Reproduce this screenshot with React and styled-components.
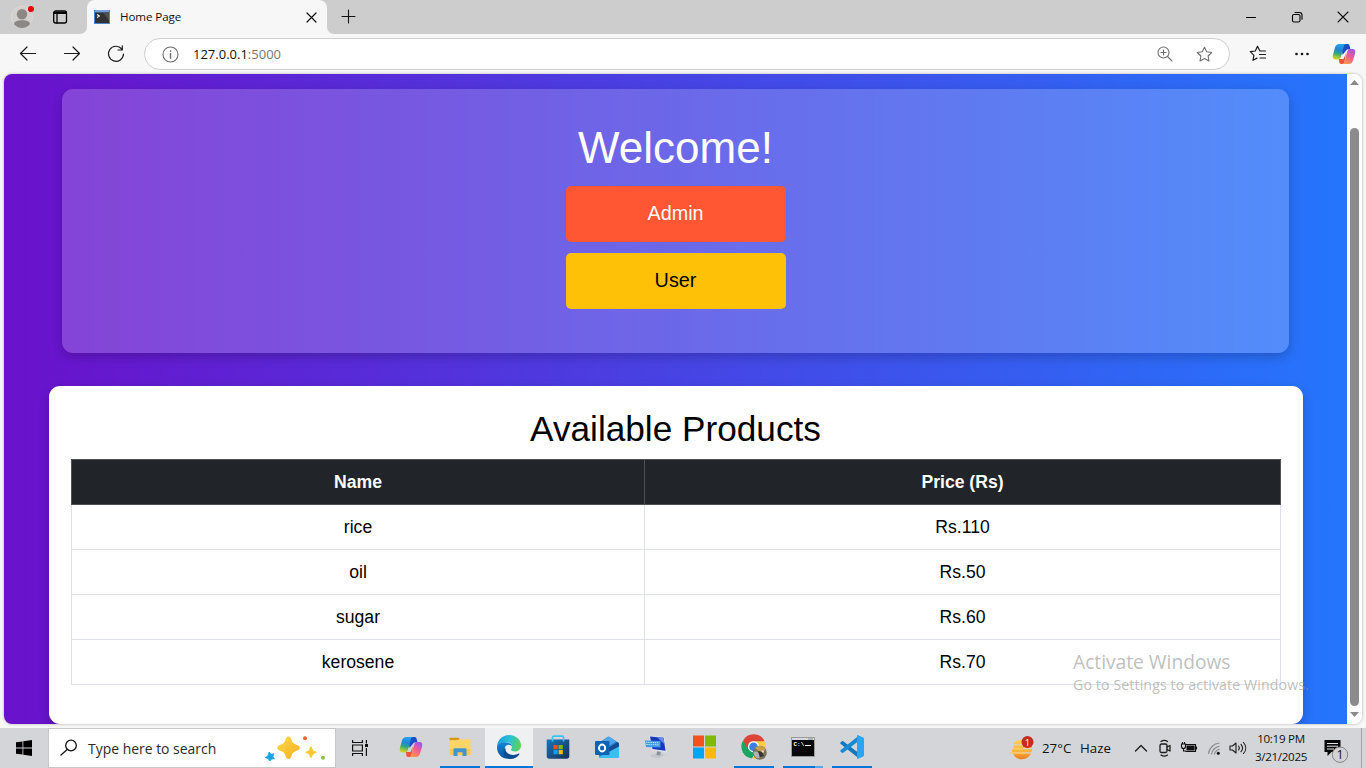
import React from "react";
import styled, { createGlobalStyle, css } from "styled-components";

const GlobalStyle = createGlobalStyle`
  *, *::before, *::after { box-sizing: border-box; }
  body { margin: 0; overflow: hidden; background: #f7f7f7; }
  svg { display: block; flex: none; }
`;

const uiFont = `"Open Sans", "Noto Sans", sans-serif`;

const Screen = styled.div`
  position: relative;
  width: 1366px;
  height: 768px;
  display: flex;
  flex-direction: column;
  background: #f7f7f7;
  font-family: ${uiFont};
  color: #111;
  overflow: hidden;
`;

/* ---------- window title bar ---------- */
const TitleBar = styled.header`
  display: flex;
  height: 34px;
  flex: none;
`;
const TitleLeft = styled.div`
  width: 87px;
  display: flex;
  align-items: center;
  gap: 18px;
  padding-left: 10px;
  background: #cdcdcd;
  border-bottom-right-radius: 7px;
`;
const TabWell = styled.div`
  width: 240px;
  background: #cdcdcd;
`;
const Tab = styled.div`
  height: 34px;
  display: flex;
  align-items: center;
  padding: 0 10px 0 7px;
  background: #f7f7f7;
  border-radius: 8px 8px 0 0;
`;
const TabTitle = styled.span`
  flex: 1;
  margin-left: 10px;
  font-size: 11.6px;
  line-height: 34px;
  letter-spacing: -0.1px;
`;
const TitleRight = styled.div`
  flex: 1;
  display: flex;
  align-items: center;
  padding: 0 17px 1px 14px;
  background: #cdcdcd;
  border-bottom-left-radius: 7px;
`;
const WindowControls = styled.div`
  margin-left: auto;
  display: flex;
  gap: 34px;
`;

/* ---------- toolbar ---------- */
const Toolbar = styled.div`
  height: 40px;
  flex: none;
  display: flex;
  align-items: center;
  padding: 0 10px 0 18px;
`;
const NavButtons = styled.div`
  display: flex;
  gap: 24px;
`;
const AddressBar = styled.div`
  width: 1086px;
  height: 32px;
  margin-left: 18px;
  display: flex;
  align-items: center;
  flex: none;
  padding: 0 16px 0 17px;
  border: 1px solid #cfcfd3;
  border-radius: 16px;
  background: #fff;
`;
const Url = styled.span`
  flex: 1;
  margin-left: 14px;
  font-size: 13px;
  line-height: 30px;
`;
const Port = styled.span`
  color: #767676;
`;
const AddressActions = styled.div`
  display: flex;
  align-items: center;
  gap: 21px;
`;
const ToolActions = styled.div`
  display: flex;
  align-items: center;
  gap: 22px;
  margin-left: 19px;
`;

/* ---------- page ---------- */
const Viewport = styled.div`
  height: 650px;
  flex: none;
  margin: 0 4px;
  display: flex;
  border-radius: 8px;
  overflow: hidden;
  box-shadow: 0 0 3px rgba(0, 0, 0, 0.3);
`;
const Page = styled.main`
  width: 1343px;
  display: flex;
  flex-direction: column;
  align-items: center;
  padding-top: 15px;
  background: linear-gradient(to right, #6a11cb, #2575fc);
  font-family: "Liberation Sans", Arial, sans-serif;
`;
const Hero = styled.section`
  width: 1227px;
  height: 264px;
  display: flex;
  flex-direction: column;
  align-items: center;
  padding-top: 32px;
  border-radius: 11px;
  background: rgba(255, 255, 255, 0.2);
  box-shadow: 0 4px 11px rgba(0, 0, 0, 0.2);
`;
const HeroTitle = styled.h1`
  margin: 0 0 12px;
  font-size: 44px;
  font-weight: 400;
  line-height: 53px;
  color: #fff;
`;
const RoleButton = styled.button`
  width: 220px;
  height: 56px;
  margin: 0 0 11px;
  padding: 0 0 2px;
  border: 0;
  border-radius: 5px;
  background: ${(p) => p.$bg};
  color: ${(p) => p.$fg};
  font: 19.8px "Liberation Sans", Arial, sans-serif;
`;
const ProductCard = styled.section`
  width: 1254px;
  height: 338px;
  margin-top: 33px;
  padding: 22px 22px 0;
  border-radius: 11px;
  background: #fff;
  box-shadow: 0 4px 11px rgba(0, 0, 0, 0.2);
`;
const CardTitle = styled.h2`
  margin: 0 0 9px;
  font-size: 35.2px;
  font-weight: 400;
  line-height: 42px;
  text-align: center;
  color: #000;
`;
const Table = styled.table`
  width: 1209px;
  border-collapse: collapse;
  table-layout: fixed;
  font-size: 17.6px;
  line-height: 26px;
  text-align: center;
  color: #000;
`;
const cell = css`
  height: 45px;
  padding: 0 0 0 1px;
`;
const Th = styled.th`
  ${cell}
  width: ${(p) => p.$w}px;
  border: 1px solid #4d5154;
  background: #212529;
  color: #fff;
`;
const Td = styled.td`
  ${cell}
  border: 1px solid #dee2e6;
`;
const Scrollbar = styled.div`
  width: 15px;
  display: flex;
  flex-direction: column;
  align-items: center;
  padding: 6px 0;
  background: #fcfcfc;
`;
const Thumb = styled.div`
  width: 9px;
  height: 578px;
  margin: 43px 0 6px;
  flex: none;
  border-radius: 5px;
  background: #8b8b8b;
`;

/* ---------- watermark ---------- */
const Watermark = styled.div`
  position: absolute;
  left: 1073px;
  top: 649px;
  color: rgba(150, 150, 150, 0.62);
  white-space: nowrap;
`;
const WatermarkTitle = styled.div`
  font-size: 19.2px;
  line-height: 26px;
`;
const WatermarkText = styled.div`
  font-size: 14.2px;
  line-height: 20px;
  letter-spacing: 0.1px;
`;

/* ---------- taskbar ---------- */
const Taskbar = styled.footer`
  height: 40px;
  flex: none;
  margin-top: 4px;
  display: flex;
  background: #d4d5d8;
`;
const StartButton = styled.div`
  width: 48px;
  display: grid;
  place-items: center;
`;
const SearchBox = styled.div`
  width: 288px;
  display: flex;
  align-items: center;
  padding: 0 9px 0 11px;
  border: 1px solid #c6c7c9;
  background: #fff;
`;
const SearchText = styled.span`
  flex: 1;
  margin-left: 10px;
  font-size: 13.95px;
  color: #2b2b2b;
`;
const TaskView = styled.div`
  width: 51px;
  display: flex;
  align-items: center;
  padding-left: 15px;
`;
const Apps = styled.div`
  display: flex;
  gap: 1px;
`;
const AppSlot = styled.div`
  width: 48px;
  display: grid;
  grid-template-rows: 38px 2px;
  justify-items: center;
  align-items: center;
  background: ${(p) => (p.$active ? "#eff0f1" : "transparent")};
`;
const Underline = styled.div`
  width: ${(p) => (p.$active ? 48 : 40)}px;
  height: 2px;
  background: ${(p) =>
    p.$split ? "linear-gradient(to right, #0078d7 32px, #5ba7e6 32px)" : "#0078d7"};
`;
const Tray = styled.div`
  margin-left: auto;
  display: flex;
  align-items: center;
`;
const Weather = styled.div`
  display: flex;
  align-items: center;
  font-size: 13.3px;
  white-space: pre;
`;
const Temp = styled.span`
  width: 38px;
  margin-left: 7px;
`;
const Condition = styled.span`
  width: 54px;
`;
const TrayIcons = styled.div`
  display: flex;
  align-items: center;
  gap: 8px;
`;
const Clock = styled.div`
  width: 56px;
  margin-left: 6px;
  font-size: 11.6px;
  line-height: 18px;
  letter-spacing: -0.3px;
  text-align: center;
  white-space: nowrap;
`;
const NoticeSlot = styled.div`
  width: 53px;
  height: 40px;
  display: flex;
  align-items: center;
  padding-left: 13px;
  border-right: 1px solid #a3a4a6;
`;
const ShowDesktop = styled.div`
  width: 4px;
`;

/* ---------- icons ---------- */
const Line = ({ w = 20, h = w, sw = 1.2, color = "#1b1b1b", children }) => (
  <svg width={w} height={h} viewBox={`0 0 ${w} ${h}`} fill="none" stroke={color}
    strokeWidth={sw} strokeLinecap="round" strokeLinejoin="round">{children}</svg>
);

const ProfileIcon = () => (
  <svg width="24" height="26" viewBox="0 0 24 26">
    <circle cx="12" cy="13" r="10.7" fill="#d3d0ce" stroke="#dcdad8" strokeWidth=".8" />
    <circle cx="12" cy="10.2" r="5.200" fill="#8b8785" />
    <path d="M4 20.300c0-3 3.300-4 8-4s8 1 8 4a10.500 10.500 0 0 1-16 0z" fill="#8b8785" />
    <circle cx="21" cy="5" r="3.100" fill="#e8000b" />
  </svg>
);
const WorkspacesIcon = () => (
  <Line w={16} sw={1.3} color="#000">
    <rect x="1.700" y="2" width="12.800" height="12" rx="2" />
    <path d="M2 3.500h12.300M2 4.400h12.300M5 5v9" />
  </Line>
);
const TerminalFavicon = () => (
  <svg width="16" height="16" viewBox="0 0 16 16">
    <rect width="16" height="14" y="1" fill="#4f82cc" />
    <rect x="1" y="1.500" width="14" height="1" fill="#9fc0ee" />
    <rect x="1" y="3.500" width="14" height="10.500" fill="#303236" />
    <path d="M9 3.500h6v8z" fill="#4c4e52" />
    <path d="M3.200 5.500l2 1.500-2 1.500" fill="none" stroke="#fff" strokeWidth="1.200" />
  </svg>
);
const CloseIcon = ({ s, sw }) => (
  <Line w={s} sw={sw} color="#111"><path d={`M1 1L${s - 1} ${s - 1}M${s - 1} 1L1 ${s - 1}`} /></Line>
);
const Star = "M8.500 1.200l2.200 4.600 5 .7-3.600 3.500.9 5-4.500-2.400L4 15l.9-5L1.300 6.500l5-.7z";

const Ribbon = ({ size = 24, id }) => (
  <svg width={size} height={size} viewBox="0 0 24 24">
    <defs>
      <linearGradient id={id + "a"} x1=".2" y1="0" x2="0" y2="1">
        <stop offset="0" stopColor="#21a0ec" /><stop offset=".3" stopColor="#2385d8" />
        <stop offset=".55" stopColor="#2ba583" />
        <stop offset=".8" stopColor="#a8c836" /><stop offset="1" stopColor="#f2ce2c" />
      </linearGradient>
      <linearGradient id={id + "b"} x1=".8" y1="0" x2=".3" y2="1">
        <stop offset="0" stopColor="#9d55ef" /><stop offset=".45" stopColor="#ea5a9b" />
        <stop offset="1" stopColor="#ff9548" />
      </linearGradient>
    </defs>
    <path d="M9 2h6.500c1.500 0 1.900.9 2.200 2.200l.8 3.300h-3.500L10.500 13z" fill="#1a50c4" />
    <path d="M7 17h4.500l2.500-6-1.500 9c-.4 1.400-1.300 2-2.500 2h-.5c-1.700 0-2.100-1-2.300-2.300z" fill="#ee5538" />
    <path d="M7.500 2h6.300c-1.300.4-1.700 1.400-2.100 2.800L9.200 14C8.600 16 7.800 17.500 5.800 17.500H3.500C1 17.500.3 15.500.9 13L3 5.500C3.600 3.200 5 2 7.500 2z" fill={`url(#${id}a)`} />
    <path d="M18 7h2.500c2.500 0 3.200 2 2.600 4.400l-2.100 7C20.300 20.700 19 22 16.500 22h-6c1.300-.4 1.700-1.400 2.100-2.800l2.300-8.700c.6-2 1.300-3.500 3.100-3.500z" fill={`url(#${id}b)`} />
  </svg>
);

const WindowsIcon = () => (
  <svg width="16" height="16" viewBox="0 0 16 16" fill="#000">
    <path d="M0 2.300L6.500 1.400v6.200H0zM7.300 1.300L16 0v7.600H7.300zM0 8.400h6.500v6.200L0 13.700zM7.300 8.400H16V16l-8.700-1.300z" />
  </svg>
);
const SearchIcon = () => (
  <Line w={18} sw={1.3} color="#111"><circle cx="11" cy="6.500" r="5.300" /><path d="M7.200 10.500L1 16" /></Line>
);
const Sparkles = () => (
  <svg width="62" height="26" viewBox="0 0 62 26">
    <defs><linearGradient id="spark" x1="0" y1="0" x2="1" y2="1">
      <stop offset="0" stopColor="#ffd94f" /><stop offset="1" stopColor="#f4b01b" />
    </linearGradient></defs>
    <path d="M24.500 1.500c1.600 0 2.600 1.500 3.300 4 .6 2 1.500 2.900 3.700 3.700 2.700.9 4.300 2 4.300 3.500s-1.600 2.700-4.300 3.600c-2.200.8-3.100 1.700-3.700 3.700-.7 2.500-1.700 4-3.300 4s-2.600-1.500-3.300-4c-.6-2-1.500-2.900-3.700-3.700-2.700-.9-4.300-2.100-4.300-3.600s1.600-2.600 4.300-3.500c2.200-.8 3.100-1.700 3.700-3.700.7-2.500 1.700-4 3.300-4z" fill="url(#spark)" />
    <path d="M47 11.500c1.200 0 1.500 3.200 2.200 3.900.7.700 3.500.9 3.500 1.900s-2.800 1.200-3.500 1.900c-.7.700-1 3.700-2.200 3.700s-1.500-3-2.200-3.700c-.7-.7-3.500-.9-3.500-1.900s2.800-1.200 3.500-1.900c.7-.7 1-3.900 2.200-3.900z" fill="#ffc936" />
    <path d="M5.200 17l1.800 2.300 2.900-.6-1 2.700 1.600 2.400-2.900.2-2 2.200-1.200-2.600-3.100-.9 2.500-1.800z" fill="#14a4e5" stroke="#14a4e5" strokeWidth=".8" strokeLinejoin="round" />
    <circle cx="41" cy="3.200" r="2" fill="#f2652f" /><circle cx="59" cy="22.800" r="2" fill="#86c540" />
  </svg>
);
const TaskViewIcon = () => (
  <svg width="18" height="18" viewBox="0 0 18 18" fill="none" stroke="#111" strokeWidth="1.200">
    <path d="M1.600 1v2.500h9.800V1M1.600 17v-2.500h9.800V17M1.600 6h9.800v6H1.600zM15.400 1v3.500M15.400 9v8" />
    <rect x="14" y="5" width="3" height="3" fill="#111" stroke="none" />
  </svg>
);
const ExplorerIcon = () => (
  <svg width="24" height="24" viewBox="0 0 24 24">
    <path d="M1.500 3.500c0-.5.300-.8.800-.8h8c.7 0 1 .3 1 .8v2H1.500z" fill="#d8990f" />
    <path d="M1.500 5.300h8l1.500-1.100h11.500V20h-21z" fill="#ffd466" />
    <path d="M1.500 14h21v6h-21z" fill="#fbc94f" />
    <path d="M5.500 21v-6.500c0-.8.500-1.300 1.300-1.300h10.400c.8 0 1.300.5 1.300 1.300V21h-4v-3.700h-5V21z" fill="#4094d0" />
  </svg>
);
const EdgeIcon = () => (
  <svg width="26" height="26" viewBox="0 0 26 26">
    <defs>
      <linearGradient id="edgeTop" x1="0" y1=".4" x2="1" y2=".6">
        <stop offset="0" stopColor="#1b9de2" /><stop offset=".5" stopColor="#2cc3d2" /><stop offset="1" stopColor="#61d34d" />
      </linearGradient>
      <linearGradient id="edgeLow" x1="0" y1="0" x2="0" y2="1">
        <stop offset="0" stopColor="#1487d8" /><stop offset="1" stopColor="#0d4f9f" />
      </linearGradient>
    </defs>
    <path d="M1 13C1 6 6.500 1 13 1s12 4.600 12 10.500c0 3.700-2.700 6-5.700 6-2.800 0-4.300-1-4.300-2 0-.7 1-1 1-3 0-2.400-2.300-4.300-5.500-4.300C5.500 8.200 1.500 10.500 1 13z" fill="url(#edgeTop)" />
    <path d="M1 13.500C1 10 5.500 7.700 10 8.200c3.700.3 6 2 6 4.500-.4-1.300-2-2-3.500-2-2.500 0-4 2.300-4 5 0 4 3.500 8 7.500 8.500-8 2.600-15-3.200-15-10.700z" fill="url(#edgeLow)" />
    <path d="M9.500 13.500c-1 4.500 3 7.500 7.500 7.500 2.500 0 4.500-.8 5.700-1.500.6-.3 1 .2.700.7-1.700 2.800-5.400 4.800-9 4.800-4.500-1-6.900-3.500-6.900-7 0-2 .8-3.600 2-4.500z" fill="#104b91" />
  </svg>
);
const StoreIcon = () => (
  <svg width="24" height="26" viewBox="0 0 24 26">
    <defs><linearGradient id="bag" x1="0" y1="0" x2="1" y2="1">
      <stop offset="0" stopColor="#1877bd" /><stop offset="1" stopColor="#152f58" />
    </linearGradient></defs>
    <path d="M.7 5.500h22.600V22a2.700 2.700 0 0 1-2.700 2.700H3.400A2.700 2.700 0 0 1 .7 22z" fill="url(#bag)" />
    <path d="M6.500 7.500V3.500c0-.8.500-1.300 1.300-1.300h8.400c.8 0 1.300.5 1.300 1.300v4" fill="none" stroke="#39c5f2" strokeWidth="1.700" />
    <path d="M7.500 11h4.200v4.200H7.500z" fill="#f25022" /><path d="M12.600 11h4.200v4.200h-4.200z" fill="#7fba00" />
    <path d="M7.500 16h4.200v4.200H7.500z" fill="#00a4ef" /><path d="M12.600 16h4.200v4.200h-4.200z" fill="#ffb900" />
  </svg>
);
const OutlookIcon = () => (
  <svg width="26" height="24" viewBox="0 0 26 24">
    <path d="M4.500 8L13.500 2c.6-.4 1.400-.4 2 0L25 8v13c0 1.200-.8 2-2 2H7c-1.200 0-2-.8-2-2z" fill="#2387d6" />
    <path d="M9 5.500l5-3.500c.5-.3 1-.3 1.500 0L22 6.500l-8 5z" fill="#4da6ea" />
    <path d="M14 13l9.500-6 1.500 1.500V12L15 18z" fill="#174b91" />
    <path d="M25 11.500V21c0 1.200-.8 2-2 2H7c-.8 0-1.500-.4-1.800-1z" fill="#38bff0" />
    <rect x="1" y="6" width="14.500" height="14" rx="1.300" fill="#0f62b6" />
    <ellipse cx="8.100" cy="13" rx="3.100" ry="3.500" fill="none" stroke="#fff" strokeWidth="1.900" />
  </svg>
);
const RemoteIcon = () => (
  <svg width="24" height="26" viewBox="0 0 24 26">
    <path d="M7 20.500l10.500-1.500 3.500 2-7 3.500-7-1.500z" fill="#c4c8ce" />
    <path d="M13 17l4 .5-1 4-3.500-.5z" fill="#8a9099" />
    <path d="M5 1.500l15.500 1.500 2.500 15.500L8 16.500z" fill="#dbe0ea" />
    <path d="M6 2.500l13.500 1.300 2 13L8.500 15z" fill="#1738bd" />
    <path d="M13 3.200l6.500.6 1 6.500z" fill="#6788ec" />
    <path d="M1 6.500l15.500.5v6.500L2 13z" fill="#3d9ae0" />
    <path d="M2 8.300l13.500.5M2.300 10.500l13.200.4" stroke="#e5f3ff" strokeWidth=".9" strokeDasharray="1.400 .8" />
  </svg>
);
const MicrosoftIcon = () => (
  <svg width="24" height="24" viewBox="0 0 24 24">
    <path d="M0 .5h11v11H0z" fill="#f4511e" /><path d="M12 .5h11v11H12z" fill="#80ba01" />
    <path d="M0 12.500h11v11H0z" fill="#03a5f0" /><path d="M12 12.500h11v11H12z" fill="#ffb902" />
  </svg>
);
const ChromeIcon = () => (
  <svg width="26" height="26" viewBox="0 0 26 26">
    <path d="M12.500 12.500L1.700 7A12 12 0 0 0 11 24.500l4-7z" fill="#1ea362" />
    <path d="M12 7.200h11.600A12 12 0 0 1 11 24.500l6-10z" fill="#ffcd40" />
    <path d="M12.500 7.200h11.100A12 12 0 0 0 2.100 6.700l5 8.500A5.800 5.800 0 0 1 12.500 7.200z" fill="#dc4437" />
    <circle cx="12.500" cy="12.700" r="5.500" fill="#fff" /><circle cx="12.500" cy="12.700" r="4.300" fill="#3b7ded" />
    <circle cx="18.800" cy="18.700" r="7" fill="#77715f" />
    <path d="M14 14c3-3 8-2.500 10.500 1l-2 3-5-1z" fill="#c6a14b" />
    <path d="M12.500 18c2-1 4-.5 5 1l1 5c-3 1-6-2-6-6z" fill="#a9b5b8" />
    <path d="M17 17l4 1 2 4-4 1z" fill="#3a342c" />
    <path d="M21 16l2 1-.5 2-2-1z" fill="#ead8b7" />
  </svg>
);
const CmdText = styled.text`
  font: bold 6px "Liberation Mono", monospace;
  fill: #fff;
`;
const CmdIcon = () => (
  <svg width="24" height="24" viewBox="0 0 24 24">
    <rect x=".5" y="2.500" width="23" height="19" fill="#080808" stroke="#9b9b9b" />
    <path d="M1 3h22v2H1z" fill="#d8d8d8" /><path d="M17 3.500h5v1h-5z" fill="#8292a5" />
    <CmdText x="2.500" y="11">C:\</CmdText><path d="M14 10.500h6" stroke="#fff" />
  </svg>
);
const VsCodeIcon = () => (
  <svg width="26" height="26" viewBox="0 0 26 26">
    <path d="M1.500 8.500L3 7.200c.4-.3.800-.3 1.200 0L20 19.300V24.500L1.500 9.800c-.5-.4-.5-.9 0-1.300z" fill="#0d78bd" />
    <path d="M1.500 17.500L3 18.800c.4.300.8.300 1.200 0L20 6.700V1.500L1.500 16.200c-.5.4-.5.900 0 1.300z" fill="#168bd2" />
    <path d="M18.500 1l5.700 2.500c.5.300.8.700.8 1.300v16.400c0 .6-.3 1-.8 1.300L18.500 25c-.4-.2-.5-.5-.5-1V2c0-.5.100-.8.500-1z" fill="#2aa5ef" />
  </svg>
);
const BadgeText = styled.text`
  font: ${(p) => p.$size}px ${uiFont};
  fill: ${(p) => p.$fill};
  text-anchor: middle;
`;
const HazeIcon = () => (
  <svg width="26" height="26" viewBox="0 0 26 26">
    <defs><linearGradient id="sun" gradientUnits="userSpaceOnUse" x1="0" y1="4" x2="0" y2="25">
      <stop offset="0" stopColor="#ffd25a" /><stop offset=".6" stopColor="#fbb23c" /><stop offset="1" stopColor="#ea7519" />
    </linearGradient></defs>
    <path d="M4 9.300C5.500 6.500 8.500 4.700 13 4.700l1 4.600zM4.500 10.300H23v3H4.500zM3 14.300h20c0 1.300-.2 2.300-.5 3H3zM4 18.600h18c-2 3.900-5 5.700-9 5.700S5.500 22.500 4 18.600z" fill="url(#sun)" />
    <path d="M1.500 18h14M5 13.700h9" stroke="#ffc859" strokeWidth="1.400" strokeLinecap="round" />
    <circle cx="18.500" cy="7" r="6" fill="#c82a20" />
    <BadgeText x="18.500" y="10.500" $size={9.5} $fill="#fff">1</BadgeText>
  </svg>
);
const NoticeIcon = () => (
  <svg width="27" height="30" viewBox="0 0 27 30">
    <path d="M2.500 7h16v12h-9l-4 4v-4h-3z" fill="#080808" />
    <path d="M5 10.500h11M5 13.200h11M5 16h7" stroke="#e4e4e4" strokeWidth="1" />
    <circle cx="18" cy="21.700" r="7.700" fill="#d3d3d4" stroke="#858585" />
    <BadgeText x="18" y="26.200" $size={12.5} $fill="#111">1</BadgeText>
  </svg>
);

const products = [
  ["rice", "Rs.110"],
  ["oil", "Rs.50"],
  ["sugar", "Rs.60"],
  ["kerosene", "Rs.70"],
];
const apps = [
  { id: "copilot", icon: <Ribbon id="task" /> },
  { id: "explorer", icon: <ExplorerIcon />, open: true },
  { id: "edge", icon: <EdgeIcon />, open: true, active: true },
  { id: "store", icon: <StoreIcon /> },
  { id: "outlook", icon: <OutlookIcon /> },
  { id: "remote", icon: <RemoteIcon /> },
  { id: "microsoft", icon: <MicrosoftIcon /> },
  { id: "chrome", icon: <ChromeIcon />, open: true },
  { id: "cmd", icon: <CmdIcon />, open: true, split: true },
  { id: "vscode", icon: <VsCodeIcon />, open: true },
];

export default function App() {
  return (
    <Screen>
      <GlobalStyle />
      <TitleBar>
        <TitleLeft><ProfileIcon /><WorkspacesIcon /></TitleLeft>
        <TabWell>
          <Tab>
            <TerminalFavicon />
            <TabTitle>Home Page</TabTitle>
            <CloseIcon s={11} sw={1.2} />
          </Tab>
        </TabWell>
        <TitleRight>
          <Line w={15} sw={1.1} color="#111"><path d="M7.500 1v13M1 7.500h13" /></Line>
          <WindowControls>
            <Line w={12} sw={1} color="#000"><path d="M1.500 6.500h9" /></Line>
            <Line w={12} sw={1.1} color="#000">
              <rect x="1.500" y="3.500" width="7.500" height="7.500" rx="1.500" />
              <path d="M4 1.500h4.500a2.500 2.500 0 0 1 2.500 2.500v4.300" />
            </Line>
            <CloseIcon s={12} sw={1.1} />
          </WindowControls>
        </TitleRight>
      </TitleBar>

      <Toolbar>
        <NavButtons>
          <Line><path d="M17.500 9.500H2.500M9 3L2.500 9.500 9 16" /></Line>
          <Line><path d="M2.500 9.500h15M11 3l6.500 6.500L11 16" /></Line>
          <Line><path d="M15.800 5A7.500 7.500 0 1 0 17.500 10M16.300 1.800V6H12" /></Line>
        </NavButtons>
        <AddressBar>
          <Line w={17} sw={1.1} color="#6f6f6f">
            <circle cx="8.500" cy="8.500" r="7.500" /><path d="M8.500 7.700v4.500M8.500 5v.3" strokeWidth="1.500" />
          </Line>
          <Url>127.0.0.1<Port>:5000</Port></Url>
          <AddressActions>
            <Line w={20} h={18} color="#6f6f6f" sw={1.1}>
              <circle cx="8.500" cy="7.500" r="5.500" /><path d="M12.500 11.500l4.500 4.500M8.500 5v5M6 7.500h5" />
            </Line>
            <Line w={17} color="#6f6f6f" sw={1.1}><path d={Star} /></Line>
          </AddressActions>
        </AddressBar>
        <ToolActions>
          <Line w={18}>
            <path d="M10.800 5.800L8.500 1.300 6.300 6l-5 .7 3.600 3.600-.9 5 4-2.200M11 6h5.500M10.500 9.500h6M11 13h5.500" />
          </Line>
          <svg width="21" height="6" viewBox="0 0 21 6" fill="#111">
            <circle cx="7.500" cy="3" r="1.300" /><circle cx="13" cy="3" r="1.300" /><circle cx="18.500" cy="3" r="1.300" />
          </svg>
          <Ribbon id="side" />
        </ToolActions>
      </Toolbar>

      <Viewport>
        <Page>
          <Hero>
            <HeroTitle>Welcome!</HeroTitle>
            <RoleButton $bg="#ff5733" $fg="#fff">Admin</RoleButton>
            <RoleButton $bg="#ffc107" $fg="#000">User</RoleButton>
          </Hero>
          <ProductCard>
            <CardTitle>Available Products</CardTitle>
            <Table>
              <thead>
                <tr><Th $w={573}>Name</Th><Th $w={636}>Price (Rs)</Th></tr>
              </thead>
              <tbody>
                {products.map(([name, price]) => (
                  <tr key={name}><Td>{name}</Td><Td>{price}</Td></tr>
                ))}
              </tbody>
            </Table>
          </ProductCard>
        </Page>
        <Scrollbar>
          <svg width="9" height="5" viewBox="0 0 9 5"><path d="M0 5L4.500 0 9 5z" fill="#8b8b8b" /></svg>
          <Thumb />
          <svg width="9" height="5" viewBox="0 0 9 5"><path d="M0 0h9L4.500 5z" fill="#8b8b8b" /></svg>
        </Scrollbar>
      </Viewport>

      <Taskbar>
        <StartButton><WindowsIcon /></StartButton>
        <SearchBox>
          <SearchIcon />
          <SearchText>Type here to search</SearchText>
          <Sparkles />
        </SearchBox>
        <TaskView><TaskViewIcon /></TaskView>
        <Apps>
          {apps.map((a) => (
            <AppSlot key={a.id} $active={a.active}>
              {a.icon}
              {a.open && <Underline $active={a.active} $split={a.split} />}
            </AppSlot>
          ))}
        </Apps>
        <Tray>
          <Weather>
            <HazeIcon />
            <Temp>27°C</Temp>
            <Condition>Haze</Condition>
          </Weather>
          <TrayIcons>
            <Line w={14} sw={1.3}><path d="M1.500 10L7 4.500l5.500 5.500" /></Line>
            <Line w={16} h={18} sw={1.3}>
              <rect x="4" y="5" width="7" height="8.500" rx="1.500" /><path d="M11 8l3-1.500v5.500l-3-1.500M5 2.500c2-1.300 4.500-1.300 6.500 0M5 16c2 1.300 4.500 1.300 6.500 0" />
            </Line>
            <svg width="18" height="16" viewBox="0 0 18 16" fill="none" stroke="#111" strokeWidth="1.100">
              <path d="M6 4.500h9.500v7H5.500M1.500 4h4v2.500a2 2 0 0 1-4 0zM2.500 2v2M4.500 2v2M3.500 8.500V11H6" />
              <path d="M7 6h7v4H7z" fill="#111" /><path d="M16.500 6.500v3" />
            </svg>
            <svg width="15" height="16" viewBox="0 0 15 16" fill="none" stroke="#8c8d8f" strokeWidth="1.200">
              <path d="M2.500 14A12 12 0 0 1 13.500 3M5.500 14.500A9 9 0 0 1 13.500 6.300M8.500 14.500A6 6 0 0 1 13.500 9.500" />
              <circle cx="12.300" cy="13.300" r="1.500" fill="#111" stroke="none" />
            </svg>
            <Line w={18} h={16} sw={1.1}>
              <path d="M1 6h2.500L7 3v10l-3.500-3H1zM9.500 6c1 1.200 1 2.800 0 4M12 4.300c2 2.300 2 5.100 0 7.400M14.500 2.500c3 3.300 3 7.700 0 11" />
            </Line>
          </TrayIcons>
          <Clock>10:19 PM<br />3/21/2025</Clock>
          <NoticeSlot><NoticeIcon /></NoticeSlot>
          <ShowDesktop />
        </Tray>
      </Taskbar>

      <Watermark>
        <WatermarkTitle>Activate Windows</WatermarkTitle>
        <WatermarkText>Go to Settings to activate Windows.</WatermarkText>
      </Watermark>
    </Screen>
  );
}
